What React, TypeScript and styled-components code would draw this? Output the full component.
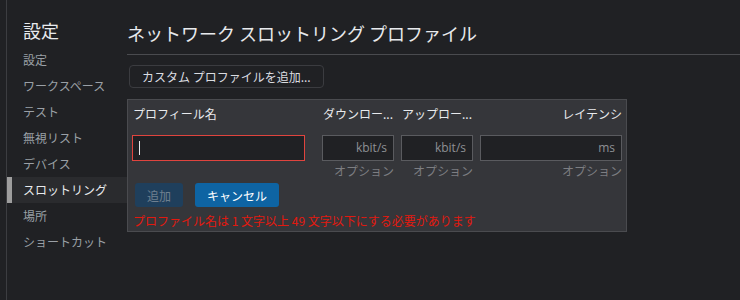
import React from 'react'
import styled, {createGlobalStyle} from 'styled-components'

const GlobalStyle = createGlobalStyle`
  html, body {
    margin: 0;
    padding: 0;
    background: #202124;
  }
  body {
    font-family: 'Noto Sans CJK JP', sans-serif;
    -webkit-font-smoothing: antialiased;
  }
  * {
    box-sizing: border-box;
  }
`

const navItems = ['設定', 'ワークスペース', 'テスト', '無視リスト', 'デバイス', 'スロットリング', '場所', 'ショートカット']

interface Column {
  title: string
  unit?: string
  align?: 'left' | 'right'
}

const columns: Column[] = [
  {title: 'プロフィール名'},
  {title: 'ダウンロー...', unit: 'kbit/s'},
  {title: 'アップロー...', unit: 'kbit/s'},
  {title: 'レイテンシ', unit: 'ms', align: 'right'},
]

function App() {
  return (
    <Page>
      <GlobalStyle />
      <Sidebar>
        <SideTitle>設定</SideTitle>
        {navItems.map((item, i) => (
          <NavItem key={item + i} $active={item === 'スロットリング'}>
            {item}
          </NavItem>
        ))}
      </Sidebar>
      <Main>
        <Heading>ネットワーク スロットリング プロファイル</Heading>
        <AddButton>カスタム プロファイルを追加...</AddButton>
        <Panel>
          <Grid>
            {columns.map((col) => (
              <HeadCell key={col.title} $align={col.align}>
                {col.title}
              </HeadCell>
            ))}
            <NameInput>
              <Caret />
            </NameInput>
            {columns.slice(1).map((col) => (
              <UnitInput key={col.title + 'in'}>{col.unit}</UnitInput>
            ))}
            <span />
            {columns.slice(1).map((col) => (
              <Hint key={col.title + 'hint'}>オプション</Hint>
            ))}
          </Grid>
          <Buttons>
            <FormButton $primary={false}>追加</FormButton>
            <FormButton $primary>キャンセル</FormButton>
          </Buttons>
          <ErrorText>プロファイル名は 1 文字以上 49 文字以下にする必要があります</ErrorText>
        </Panel>
      </Main>
    </Page>
  )
}

export default App

const Page = styled.div`
  display: flex;
  height: 300px;
  padding-left: 6px;
  background: #202124;
  overflow: hidden;
`

const Sidebar = styled.nav`
  width: 121px;
  flex-shrink: 0;
  display: flex;
  flex-direction: column;
  border-left: 1px solid #3c3d41;
`

const SideTitle = styled.h1`
  margin: 0;
  height: 47px;
  padding: 18px 0 0 16px;
  font-weight: 400;
  font-size: 18px;
  line-height: 24px;
  color: #e8eaed;
`

const NavItem = styled.div<{$active: boolean}>`
  height: 26px;
  line-height: 26px;
  padding-left: 11px;
  font-size: 12px;
  color: ${(p) => (p.$active ? '#e8eaed' : '#9aa0a6')};
  background: ${(p) => (p.$active ? '#2a2b2e' : 'transparent')};
  border-left: 5px solid ${(p) => (p.$active ? '#9e9e9e' : 'transparent')};
  white-space: nowrap;
`

const Main = styled.main`
  flex: 1;
  display: flex;
  flex-direction: column;
  align-items: flex-start;
`

const Heading = styled.h2`
  align-self: stretch;
  margin: 0;
  height: 55px;
  padding-top: 21px;
  font-weight: 400;
  font-size: 18px;
  line-height: 24px;
  color: #e8eaed;
  border-bottom: 1px solid #4a4b4f;
  white-space: nowrap;
`

const AddButton = styled.button`
  margin: 10px 0 0 2px;
  height: 23px;
  padding: 0 12px;
  background: #202124;
  border: 1px solid #3b3c40;
  border-radius: 4px;
  font-family: 'Noto Sans CJK JP', sans-serif;
  font-size: 12px;
  color: #dadce0;
  line-height: 21px;
`

const Panel = styled.section`
  margin-top: 11px;
  width: 500px;
  padding: 0 4px 2px;
  background: #35363a;
  border: 1px solid #4a4b4f;
`

const Grid = styled.div`
  display: grid;
  grid-template-columns: 183px 72px 72px 1fr;
  grid-template-rows: 35px 26px 20px;
  column-gap: 7px;
`

const HeadCell = styled.div<{$align?: 'left' | 'right'}>`
  padding-left: 1px;
  line-height: 28px;
  font-size: 12px;
  color: #e8eaed;
  text-align: ${(p) => p.$align || 'left'};
  white-space: nowrap;
  overflow: hidden;
`

const NameInput = styled.div`
  width: 173px;
  height: 26px;
  background: #202124;
  border: 1px solid #e0443e;
  display: flex;
  align-items: center;
  padding-left: 6px;
`

const Caret = styled.span`
  width: 1px;
  height: 14px;
  background: #e8eaed;
`

const UnitInput = styled.div`
  height: 26px;
  background: #202124;
  border: 1px solid #5a5b5f;
  padding-right: 6px;
  text-align: right;
  line-height: 24px;
  font-family: 'Open Sans', sans-serif;
  font-size: 12px;
  color: #8e9094;
`

const Hint = styled.div`
  text-align: right;
  line-height: 20px;
  font-size: 12px;
  color: #7d7e82;
  white-space: nowrap;
`

const Buttons = styled.div`
  display: flex;
  gap: 12px;
  margin-top: 2px;
  padding-left: 3px;
`

const FormButton = styled.button<{$primary: boolean}>`
  height: 24px;
  padding: 0 12px;
  border: none;
  border-radius: 3px;
  font-family: 'Noto Sans CJK JP', sans-serif;
  font-size: 12px;
  background: ${(p) => (p.$primary ? '#0e64a3' : '#1f3f5c')};
  color: ${(p) => (p.$primary ? '#ffffff' : '#6f8090')};
`

const ErrorText = styled.p`
  margin: 6px 0 0 1px;
  line-height: 16px;
  font-size: 12px;
  color: #e3190f;
  white-space: nowrap;
`
